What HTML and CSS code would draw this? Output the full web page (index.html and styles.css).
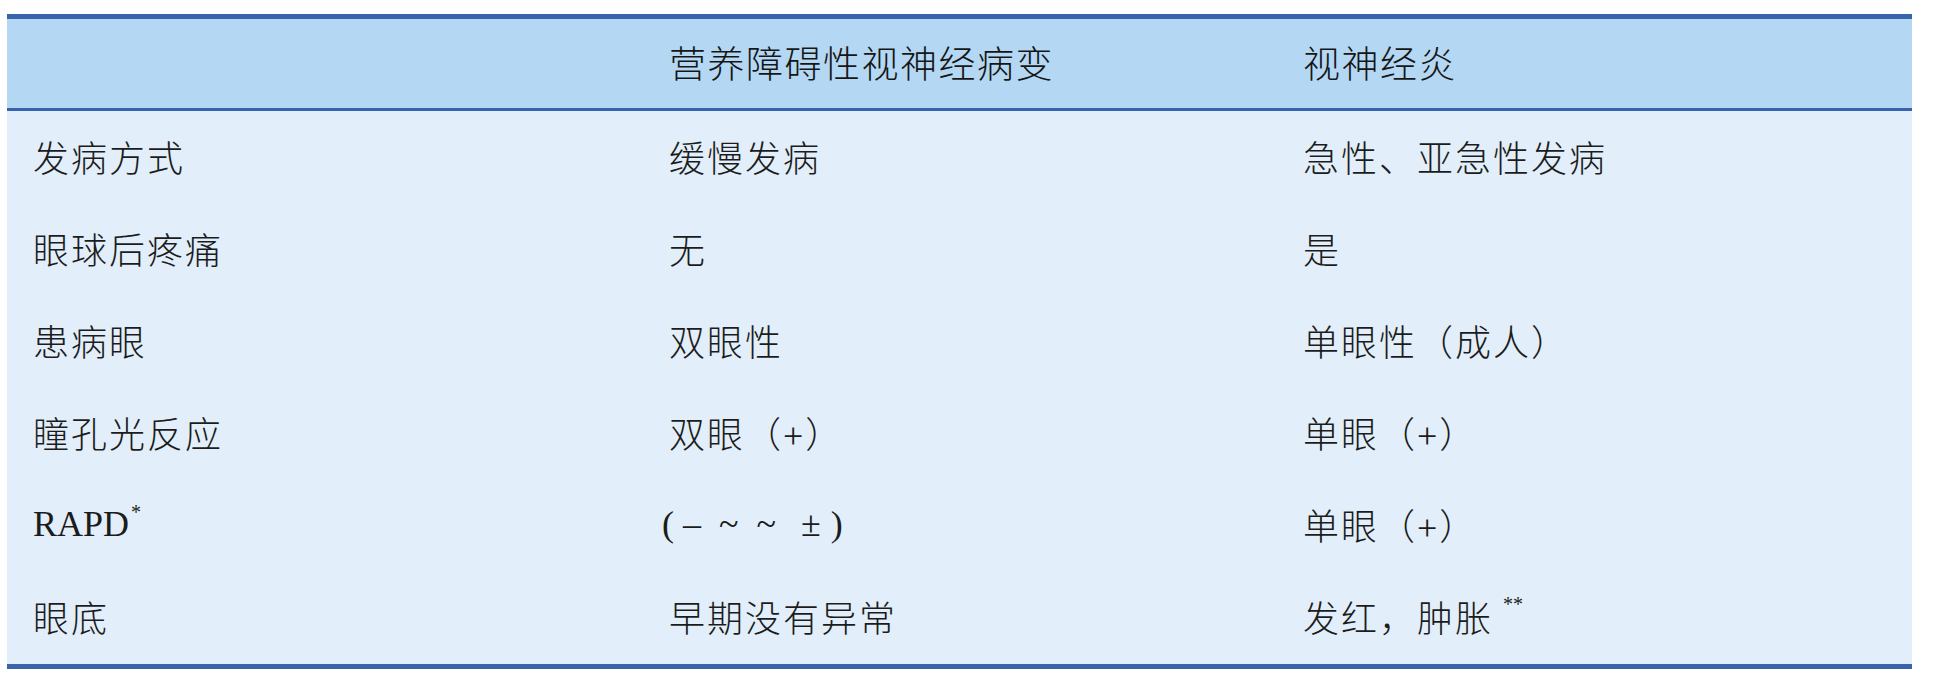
FILE: index.html
```html
<!DOCTYPE html>
<html lang="zh-CN">
<head>
<meta charset="utf-8">
<title>营养障碍性视神经病变与视神经炎</title>
<link rel="stylesheet" href="styles.css">
</head>
<body>
<div class="tbl">
  <div class="row head">
    <div class="cell"></div>
    <div class="cell">营养障碍性视神经病变</div>
    <div class="cell">视神经炎</div>
  </div>
  <div class="body">
    <div class="row">
      <div class="cell">发病方式</div>
      <div class="cell">缓慢发病</div>
      <div class="cell">急性、亚急性发病</div>
    </div>
    <div class="row">
      <div class="cell">眼球后疼痛</div>
      <div class="cell">无</div>
      <div class="cell">是</div>
    </div>
    <div class="row">
      <div class="cell">患病眼</div>
      <div class="cell">双眼性</div>
      <div class="cell">单眼性（成人）</div>
    </div>
    <div class="row">
      <div class="cell">瞳孔光反应</div>
      <div class="cell">双眼（+）</div>
      <div class="cell">单眼（+）</div>
    </div>
    <div class="row">
      <div class="cell"><span class="latin">RAPD</span><sup>*</sup></div>
      <div class="cell"><span class="latin sym">(<span class="sp">–</span><span class="sp">~</span><span class="sp">~</span><span class="sp wide">±</span>)</span></div>
      <div class="cell">单眼（+）</div>
    </div>
    <div class="row">
      <div class="cell">眼底</div>
      <div class="cell">早期没有异常</div>
      <div class="cell">发红，肿胀<sup class="dbl">**</sup></div>
    </div>
  </div>
</div>
</body>
</html>
```

FILE: styles.css
```css
html, body {
  margin: 0;
  padding: 0;
  background: #ffffff;
}

.tbl {
  margin: 14px 0 0 7px;
  width: 1905px;
  border-bottom: 5px solid #3964ad;
  font-family: "Liberation Serif", "Noto Sans CJK SC", serif;
  color: #1c1c1c;
}

.row {
  display: grid;
  grid-template-columns: 636px 634px 635px;
  height: 92px;
}

.cell {
  display: flex;
  align-items: center;
  padding-left: 26px;
  padding-bottom: 3px;
  font-size: 36px;
  font-weight: 300;
  letter-spacing: 2px;
  white-space: nowrap;
}

.head {
  height: 89px;
  background: #b4d8f3;
  border-top: 5px solid #3964ad;
  border-bottom: 3px solid #3964ad;
}

.head .cell {
  font-family: "Noto Sans CJK SC", sans-serif;
  font-size: 37px;
  font-weight: 300;
  letter-spacing: 1.5px;
  color: #161616;
  padding-bottom: 4px;
}

.body {
  background: #e2effa;
  padding-bottom: 1px;
}

.latin {
  font-family: "Liberation Serif", serif;
  font-weight: 400;
  font-size: 36px;
  letter-spacing: 0;
}

.sym {
  margin-left: -7px;
}

.sp {
  display: inline-block;
  margin: 0 9px;
}

.sp.wide {
  margin: 0 10px 0 16px;
}

sup {
  font-family: "Liberation Serif", serif;
  font-size: 20px;
  font-weight: 400;
  align-self: flex-start;
  margin-top: 22px;
  margin-left: 2px;
}

sup.dbl {
  margin-left: 10px;
  letter-spacing: 0;
}
```
